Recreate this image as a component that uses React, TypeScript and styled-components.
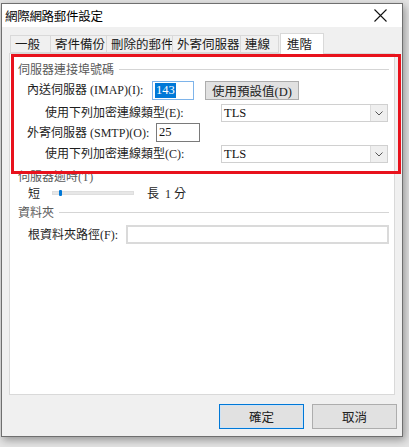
import React from "react";
import styled, { createGlobalStyle } from "styled-components";

const Global = createGlobalStyle`
  html, body { margin: 0; padding: 0; }
  body {
    background: #e4e4e4;
    width: 409px;
    height: 447px;
    overflow: hidden;
    font-family: "Liberation Serif", "Noto Sans CJK TC", serif;
  }
`;

const SANS = `"Noto Sans CJK TC", "Noto Sans", sans-serif`;
const LABEL = `"Liberation Serif", "Noto Sans CJK TC", serif`;

const Page = styled.div`
  position: relative;
  padding: 3px 0 0 1px;
  width: 409px;
  height: 447px;
  box-sizing: border-box;
`;

const Dialog = styled.div`
  width: 402px;
  height: 434px;
  box-sizing: border-box;
  border: 1px solid #6f6f6f;
  background: #f0f0f0;
  display: flex;
  flex-direction: column;
  box-shadow: 2px 3px 8px rgba(0, 0, 0, 0.35);
`;

const TitleBar = styled.div`
  height: 23px;
  background: #ffffff;
  display: flex;
  align-items: center;
  justify-content: space-between;
  padding: 0 15px 0 3px;
  font-family: ${SANS};
  font-size: 12.5px;
  color: #000;
`;

const TitleText = styled.span`
  line-height: 16px;
  letter-spacing: -0.3px;
`;

const Body = styled.div`
  flex: 1;
  display: flex;
  flex-direction: column;
  padding: 6px 5px 0 7px;
`;

const TabStrip = styled.div`
  display: flex;
  align-items: flex-end;
  height: 20px;
  padding-left: 1px;
  position: relative;
  z-index: 1;
`;

const Tab = styled.div<{ $w: number; $active?: boolean }>`
  width: ${(p) => p.$w}px;
  box-sizing: border-box;
  height: ${(p) => (p.$active ? 21 : 18)}px;
  margin-bottom: ${(p) => (p.$active ? -1 : 0)}px;
  margin-left: ${(p) => (p.$active ? 1 : -1)}px;
  background: ${(p) => (p.$active ? "#ffffff" : "#f0f0f0")};
  border: 1px solid #d9d9d9;
  border-bottom: ${(p) => (p.$active ? "none" : "1px solid #d9d9d9")};
  font-family: ${SANS};
  font-size: 12.5px;
  color: #1a1a1a;
  display: flex;
  align-items: center;
  padding-left: ${(p) => (p.$active ? 6 : 4)}px;
  line-height: 16px;
  white-space: nowrap;
  &:first-child { margin-left: 0; }
`;

const Panel = styled.div`
  width: 386px;
  height: 342px;
  box-sizing: border-box;
  background: #ffffff;
  border: 1px solid #d9d9d9;
  padding: 6px 5px 0 8px;
  display: flex;
  flex-direction: column;
  font-family: ${LABEL};
  font-size: 12px;
  color: #1e1e1e;
`;

const GroupHeader = styled.div<{ $top: number }>`
  display: flex;
  align-items: center;
  gap: 5px;
  height: 16px;
  margin-top: ${(p) => p.$top}px;
  color: #5a5a5a;
  white-space: nowrap;
  &::after {
    content: "";
    flex: 1;
    height: 1px;
    background: #d5d5d5;
  }
`;

const PlainHeader = styled.div<{ $top: number }>`
  height: 16px;
  display: flex;
  align-items: center;
  margin-top: ${(p) => p.$top}px;
  color: #5a5a5a;
  white-space: nowrap;
`;

const Row = styled.div<{ $top: number; $h: number; $indent: number }>`
  display: flex;
  align-items: center;
  height: ${(p) => p.$h}px;
  margin-top: ${(p) => p.$top}px;
  margin-left: ${(p) => p.$indent}px;
  white-space: nowrap;
`;

const Label = styled.span<{ $w: number }>`
  width: ${(p) => p.$w}px;
  flex: none;
  line-height: 16px;
`;

const TextBox = styled.div<{ $w: number; $focus?: boolean; $soft?: boolean }>`
  width: ${(p) => p.$w}px;
  height: 19px;
  box-sizing: border-box;
  border: ${(p) =>
    p.$focus ? "1px solid #7eb4ea" : p.$soft ? "2px solid #dadada" : "1px solid #7a7a7a"};
  background: #fff;
  display: flex;
  align-items: center;
  padding-left: 2px;
  font-family: ${LABEL};
  font-size: 12.5px;
  color: #111;
  flex: none;
`;

const Selected = styled.span`
  background: #0078d7;
  color: #fff;
  line-height: 15px;
  padding: 0 1px;
`;

const PushButton = styled.div<{ $w: number; $h: number; $default?: boolean; $sans?: boolean }>`
  width: ${(p) => p.$w}px;
  height: ${(p) => p.$h}px;
  box-sizing: border-box;
  margin-left: ${(p) => (p.$sans ? 0 : 11)}px;
  background: #e1e1e1;
  border: 1px solid ${(p) => (p.$default ? "#0078d7" : "#adadad")};
  ${(p) => (p.$default ? "box-shadow: inset 0 0 0 1px #cfe3f5;" : "")}
  display: flex;
  align-items: center;
  justify-content: center;
  font-family: ${(p) => (p.$sans ? SANS : LABEL)};
  font-size: 12.5px;
  color: #222;
  flex: none;
`;

const Select = styled.div`
  width: 167px;
  height: 18px;
  box-sizing: border-box;
  border: 1px solid #d0d0d0;
  background: #fff;
  display: flex;
  align-items: stretch;
  flex: none;
`;

const SelectValue = styled.span`
  flex: 1;
  display: flex;
  align-items: center;
  padding-left: 2px;
  font-family: ${LABEL};
  font-size: 12.5px;
  color: #111;
`;

const DropButton = styled.span`
  width: 16px;
  border-left: 1px solid #dcdcdc;
  background: #efefef;
  display: flex;
  align-items: center;
  justify-content: center;
`;

const Track = styled.div`
  position: relative;
  width: 82px;
  height: 4px;
  box-sizing: border-box;
  background: #e7e7e7;
  border: 1px solid #dedede;
  margin: 0 13px 0 12px;
  flex: none;
`;

const Thumb = styled.span`
  position: absolute;
  left: 6px;
  top: -2px;
  width: 3px;
  height: 6px;
  background: #0078d7;
  border-radius: 1px;
`;

const Footer = styled.div`
  display: flex;
  justify-content: flex-end;
  gap: 8px;
  padding-top: 9px;
  padding-right: 0;
`;

const Annotation = styled.div<{ $l: number; $t: number; $w: number; $h: number }>`
  position: absolute;
  left: ${(p) => p.$l}px;
  top: ${(p) => p.$t}px;
  width: ${(p) => p.$w}px;
  height: ${(p) => p.$h}px;
  box-sizing: border-box;
  border: 3px solid #e8121c;
  pointer-events: none;
`;

const Chevron = () => (
  <svg width="8" height="5" viewBox="0 0 8 5">
    <path d="M0.5 0.5 L4 4 L7.5 0.5" fill="none" stroke="#555" strokeWidth="1" />
  </svg>
);

const CloseIcon = () => (
  <svg width="13" height="13" viewBox="0 0 13 13">
    <path d="M0.5 0.5 L12.5 12.5 M12.5 0.5 L0.5 12.5" stroke="#111" strokeWidth="1.1" />
  </svg>
);

const tabs: { label: string; w: number; active?: boolean }[] = [
  { label: "一般", w: 41 },
  { label: "寄件備份", w: 57 },
  { label: "刪除的郵件", w: 67 },
  { label: "外寄伺服器", w: 69 },
  { label: "連線", w: 39 },
  { label: "進階", w: 44, active: true },
];

export default function App() {
  return (
    <>
      <Global />
      <Page>
        <Dialog>
          <TitleBar>
            <TitleText>網際網路郵件設定</TitleText>
            <CloseIcon />
          </TitleBar>
          <Body>
            <TabStrip>
              {tabs.map((t) => (
                <Tab key={t.label} $w={t.w} $active={t.active}>
                  {t.label}
                </Tab>
              ))}
            </TabStrip>
            <Panel>
              <GroupHeader $top={1}>伺服器連接埠號碼</GroupHeader>
              <Row $top={3} $h={20} $indent={9}>
                <Label $w={125}>內送伺服器 (IMAP)(I):</Label>
                <TextBox $w={42} $focus>
                  <Selected>143</Selected>
                </TextBox>
                <PushButton $w={94} $h={19}>使用預設值(D)</PushButton>
              </Row>
              <Row $top={4} $h={18} $indent={27}>
                <Label $w={176}>使用下列加密連線類型(E):</Label>
                <Select>
                  <SelectValue>TLS</SelectValue>
                  <DropButton>
                    <Chevron />
                  </DropButton>
                </Select>
              </Row>
              <Row $top={1} $h={19} $indent={9}>
                <Label $w={129}>外寄伺服器 (SMTP)(O):</Label>
                <TextBox $w={44}>25</TextBox>
              </Row>
              <Row $top={3} $h={18} $indent={27}>
                <Label $w={176}>使用下列加密連線類型(C):</Label>
                <Select>
                  <SelectValue>TLS</SelectValue>
                  <DropButton>
                    <Chevron />
                  </DropButton>
                </Select>
              </Row>
              <PlainHeader $top={5}>伺服器逾時(T)</PlainHeader>
              <Row $top={1} $h={16} $indent={10}>
                <span>短</span>
                <Track>
                  <Thumb />
                </Track>
                <span>長</span>
                <span style={{ marginLeft: 6 }}>1 分</span>
              </Row>
              <GroupHeader $top={3}>資料夾</GroupHeader>
              <Row $top={5} $h={19} $indent={10}>
                <Label $w={98}>根資料夾路徑(F):</Label>
                <TextBox $w={263} $soft />
              </Row>
            </Panel>
            <Footer>
              <PushButton $w={85} $h={25} $default $sans>
                確定
              </PushButton>
              <PushButton $w={85} $h={25} $sans>
                取消
              </PushButton>
            </Footer>
          </Body>
        </Dialog>
        <Annotation $l={280} $t={34} $w={43} $h={22} />
        <Annotation $l={11} $t={54} $w={390} $h={120} />
      </Page>
    </>
  );
}
